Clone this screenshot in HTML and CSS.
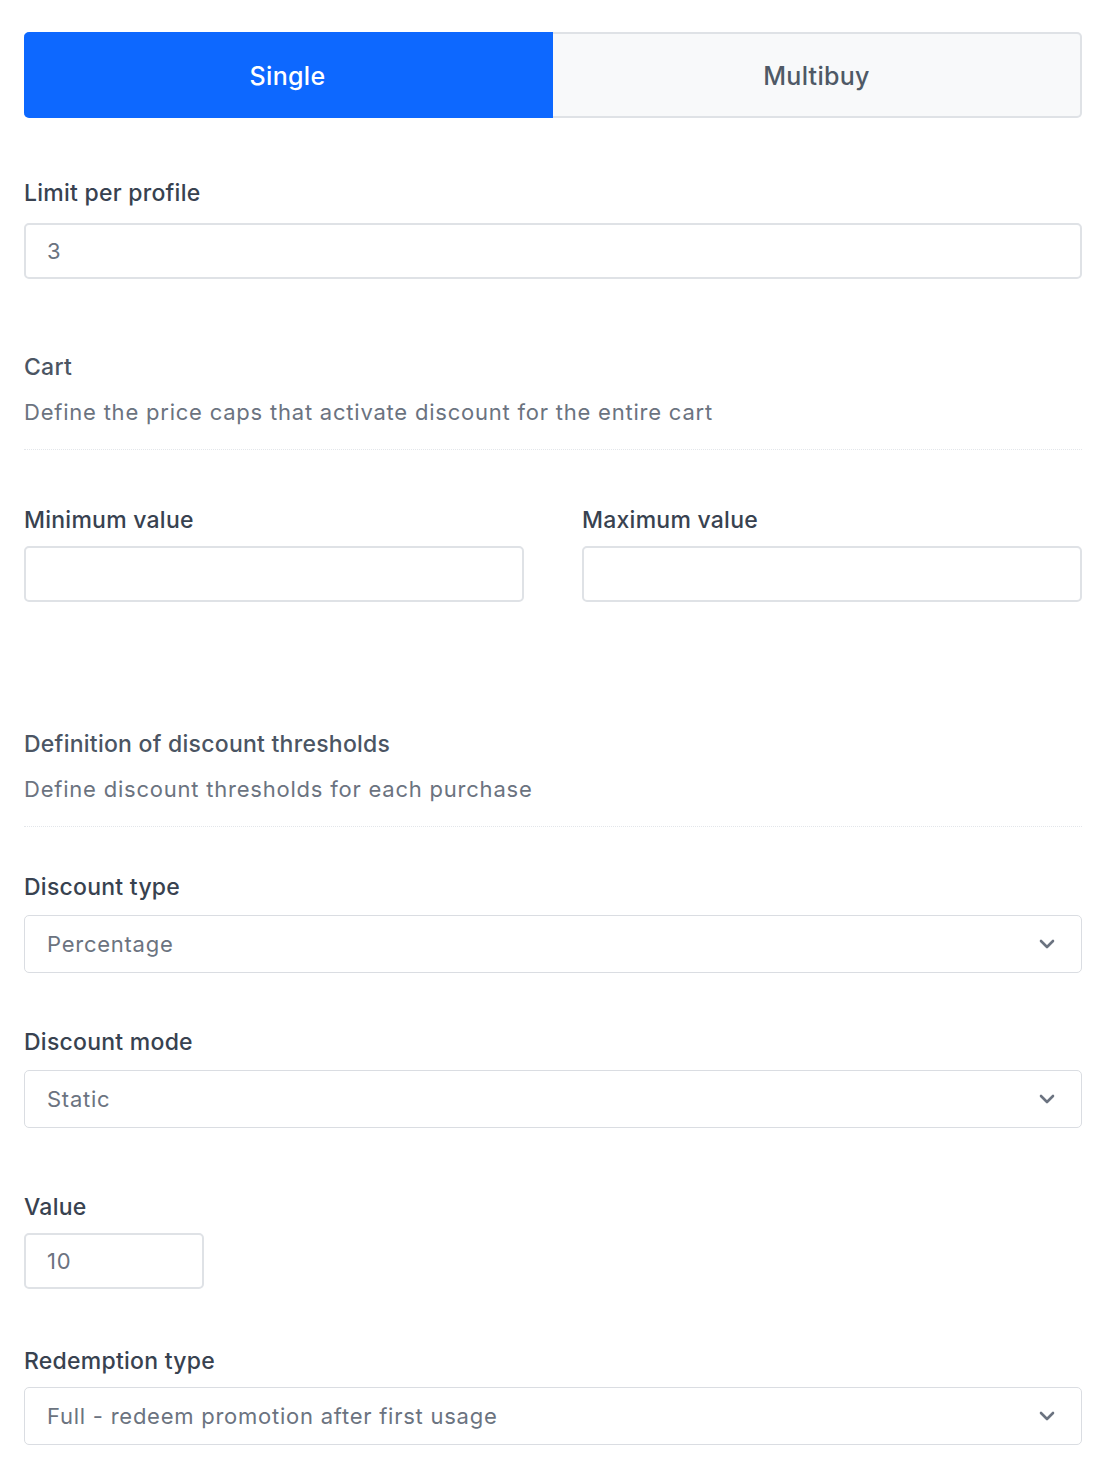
FILE: index.html
```html
<!DOCTYPE html>
<html lang="en">
<head>
<meta charset="utf-8">
<title>Promotion settings</title>
<link rel="stylesheet" href="styles.css">
</head>
<body>
<main class="form">
  <div class="tabs">
    <button class="tab tab-active" type="button">Single</button>
    <button class="tab" type="button">Multibuy</button>
  </div>

  <div class="field field-first">
    <label class="label">Limit per profile</label>
    <div class="input"><span class="input-text">3</span></div>
  </div>

  <section class="section section-cart">
    <h3 class="section-title">Cart</h3>
    <p class="section-desc">Define the price caps that activate discount for the entire cart</p>
    <div class="divider"></div>
  </section>

  <div class="row">
    <div class="field">
      <label class="label">Minimum value</label>
      <div class="input"></div>
    </div>
    <div class="field">
      <label class="label">Maximum value</label>
      <div class="input"></div>
    </div>
  </div>

  <section class="section section-thresholds">
    <h3 class="section-title">Definition of discount thresholds</h3>
    <p class="section-desc">Define discount thresholds for each purchase</p>
    <div class="divider"></div>
  </section>

  <div class="field field-type">
    <label class="label">Discount type</label>
    <div class="select"><span class="input-text">Percentage</span>
      <svg class="chev" width="16" height="10" viewBox="0 0 16 10"><path d="M2 2l6 6 6-6" fill="none" stroke="#6b7380" stroke-width="2.6" stroke-linecap="round" stroke-linejoin="round"/></svg>
    </div>
  </div>

  <div class="field field-next">
    <label class="label">Discount mode</label>
    <div class="select"><span class="input-text">Static</span>
      <svg class="chev" width="16" height="10" viewBox="0 0 16 10"><path d="M2 2l6 6 6-6" fill="none" stroke="#6b7380" stroke-width="2.6" stroke-linecap="round" stroke-linejoin="round"/></svg>
    </div>
  </div>

  <div class="field field-value">
    <label class="label">Value</label>
    <div class="input input-small"><span class="input-text">10</span></div>
  </div>

  <div class="field field-last">
    <label class="label">Redemption type</label>
    <div class="select"><span class="input-text">Full - redeem promotion after first usage</span>
      <svg class="chev" width="16" height="10" viewBox="0 0 16 10"><path d="M2 2l6 6 6-6" fill="none" stroke="#6b7380" stroke-width="2.6" stroke-linecap="round" stroke-linejoin="round"/></svg>
    </div>
  </div>
</main>
</body>
</html>
```

FILE: styles.css
```css
* { box-sizing: border-box; }

body {
  margin: 0;
  background: #ffffff;
  font-family: Inter, "Noto Sans", "Liberation Sans", sans-serif;
  color: #384250;
}

.form {
  padding: 32px 20px 40px 24px;
  display: flex;
  flex-direction: column;
}

.tabs {
  display: flex;
  height: 86px;
}

.tab {
  flex: 1;
  font-family: inherit;
  font-size: 25px;
  font-weight: 500;
  border: 2px solid #dfe2e6;
  background: #f8f9fa;
  color: #4f5966;
  border-radius: 0 5px 5px 0;
  border-left: none;
  letter-spacing: 0.3px;
  padding-top: 3px;
}

.tab-active {
  background: #0d68ff;
  border-color: #0d68ff;
  color: #ffffff;
  border-radius: 5px 0 0 5px;
}

.field {
  display: flex;
  flex-direction: column;
}

.label {
  font-size: 23px;
  line-height: 30px;
  font-weight: 500;
  color: #384250;
  margin-bottom: 15px;
  letter-spacing: 0.25px;
}

.field-first { margin-top: 60px; }

.input {
  height: 56px;
  border: 2px solid #dfe2e6;
  border-radius: 5px;
  display: flex;
  align-items: center;
  padding: 0 21px;
}

.input-small { width: 180px; }

.select {
  height: 58px;
  border: 1px solid #dadde2;
  border-radius: 5px;
  display: flex;
  align-items: center;
  justify-content: space-between;
  padding: 0 26px 0 22px;
}

.input-text {
  font-size: 22px;
  color: #6b7380;
  letter-spacing: 0.75px;
}

.section-title {
  margin: 0;
  font-size: 23px;
  line-height: 30px;
  font-weight: 500;
  color: #4b5563;
  letter-spacing: 0.25px;
}

.section-desc {
  margin: 15px 0 0;
  font-size: 22px;
  line-height: 30px;
  color: #6b7380;
  letter-spacing: 0.78px;
}

.divider {
  margin-top: 22px;
  border-top: 1px dotted #e3e6ea;
}

.section-cart { margin-top: 73px; }

.row {
  margin-top: 55px;
  display: grid;
  grid-template-columns: 1fr 1fr;
  column-gap: 58px;
}

.row .label { margin-bottom: 11px; }

.section-thresholds { margin-top: 127px; }

.field-type { margin-top: 45px; }
.field-type .label { margin-bottom: 13px; }

.field-next { margin-top: 54px; }
.field-next .label { margin-bottom: 13px; }

.field-value { margin-top: 64px; }
.field-value .label { margin-bottom: 11px; }

.field-last { margin-top: 57px; }
.field-last .label { margin-bottom: 11px; }

.chev { display: block; }
```
